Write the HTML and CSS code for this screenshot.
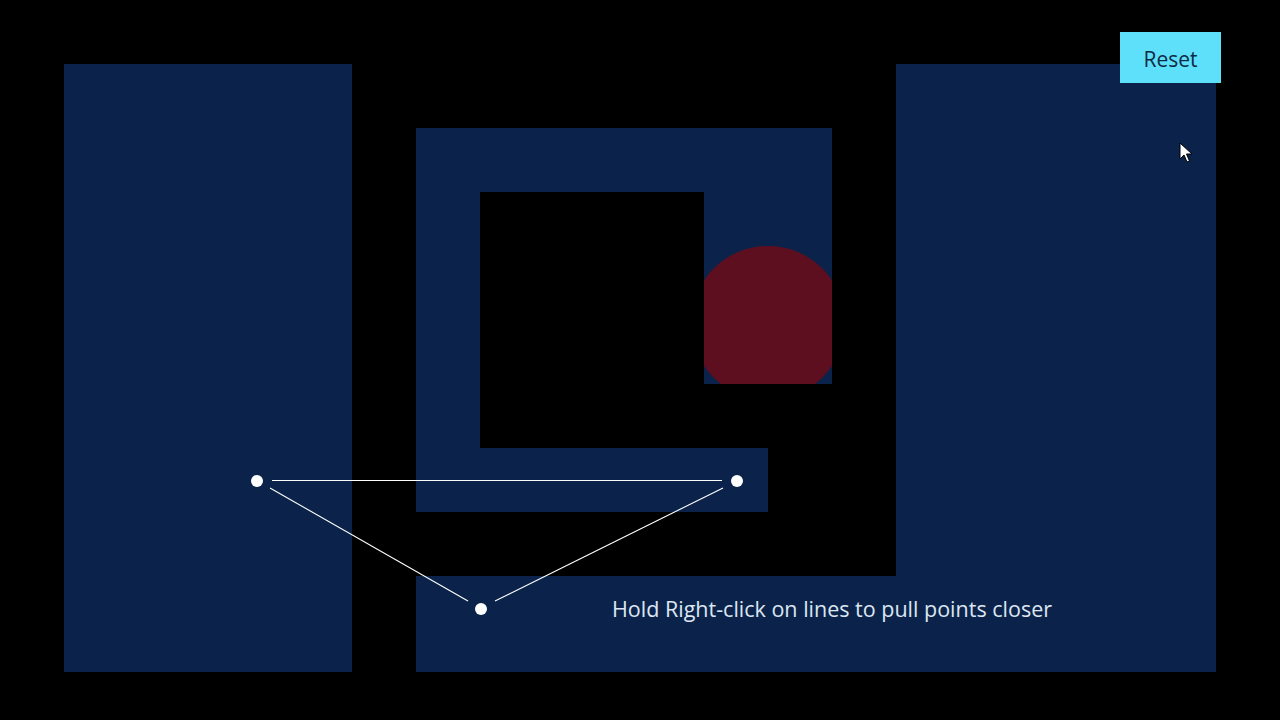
FILE: index.html
```html
<!DOCTYPE html>
<html lang="en">
<head>
<meta charset="utf-8">
<title>Maze</title>
<link rel="stylesheet" href="styles.css">
</head>
<body>
<main class="stage">
  <div class="level">
    <div class="wall wall-left"></div>
    <div class="wall wall-mid-top"></div>
    <div class="wall wall-mid-left"></div>
    <div class="wall wall-mid-bottom"></div>
    <div class="wall wall-corner"><div class="orb"></div></div>
    <div class="wall wall-bottom"></div>
    <div class="wall wall-right"></div>
    <p class="hint">Hold Right-click on lines to pull points closer</p>
  </div>
  <svg class="rope" width="1280" height="720" viewBox="0 0 1280 720">
    <g stroke="#ffffff" stroke-width="1.1">
      <line x1="272" y1="480.5" x2="722" y2="480.5"/>
      <line x1="270" y1="488" x2="468" y2="601"/>
      <line x1="495" y1="601" x2="723" y2="488"/>
    </g>
    <g fill="#ffffff">
      <circle cx="257" cy="481" r="6"/>
      <circle cx="737" cy="481" r="6"/>
      <circle cx="481" cy="609" r="6"/>
    </g>
  </svg>
  <button class="reset" type="button">Reset</button>
  <svg class="cursor" width="14" height="22" viewBox="0 0 14 22">
    <path d="M1 1 L1 17 L5 13 L8 20 L10.5 19 L7.5 12 L13 12 Z" fill="#ffffff" stroke="#000000" stroke-width="1" stroke-linejoin="round"/>
  </svg>
</main>
</body>
</html>
```
FILE: styles.css
```css
html, body {
  margin: 0;
  padding: 0;
  background: #000000;
}

.stage {
  position: relative;
  width: 1280px;
  height: 720px;
  overflow: hidden;
  background: #000000;
  font-family: "Open Sans", "Noto Sans", sans-serif;
}

.level {
  display: grid;
  grid-template-columns: repeat(40, 32px);
  grid-template-rows: repeat(23, 32px);
  width: 1280px;
  height: 720px;
}

.wall {
  background: #0b234a;
}

.wall-left { grid-column: 3 / 12; grid-row: 3 / 22; }
.wall-mid-top { grid-column: 14 / 23; grid-row: 5 / 7; }
.wall-mid-left { grid-column: 14 / 16; grid-row: 7 / 17; }
.wall-mid-bottom { grid-column: 16 / 25; grid-row: 15 / 17; }
.wall-corner {
  grid-column: 23 / 27;
  grid-row: 5 / 13;
  position: relative;
  overflow: hidden;
}
.wall-bottom { grid-column: 14 / 29; grid-row: 19 / 22; }
.wall-right { grid-column: 29 / 39; grid-row: 3 / 22; }

.orb {
  position: absolute;
  left: -13px;
  top: 118px;
  width: 154px;
  height: 154px;
  border-radius: 50%;
  background: #5e0f1f;
}

.hint {
  grid-column: 14 / 40;
  grid-row: 19 / 21;
  align-self: center;
  margin: 0;
  padding-left: 196px;
  padding-top: 2px;
  color: #dde6f2;
  font-size: 21.5px;
  line-height: 28px;
  z-index: 1;
}

.rope {
  position: absolute;
  left: 0;
  top: 0;
  pointer-events: none;
}

.reset {
  position: absolute;
  left: 1120px;
  top: 32px;
  width: 101px;
  height: 51px;
  border: none;
  border-radius: 0;
  background: #5fe0fa;
  color: #0c2a44;
  font-family: "Open Sans", "Noto Sans", sans-serif;
  font-size: 21px;
  padding: 2px 0 0 0;
}

.cursor {
  position: absolute;
  left: 1179px;
  top: 142px;
}
```
